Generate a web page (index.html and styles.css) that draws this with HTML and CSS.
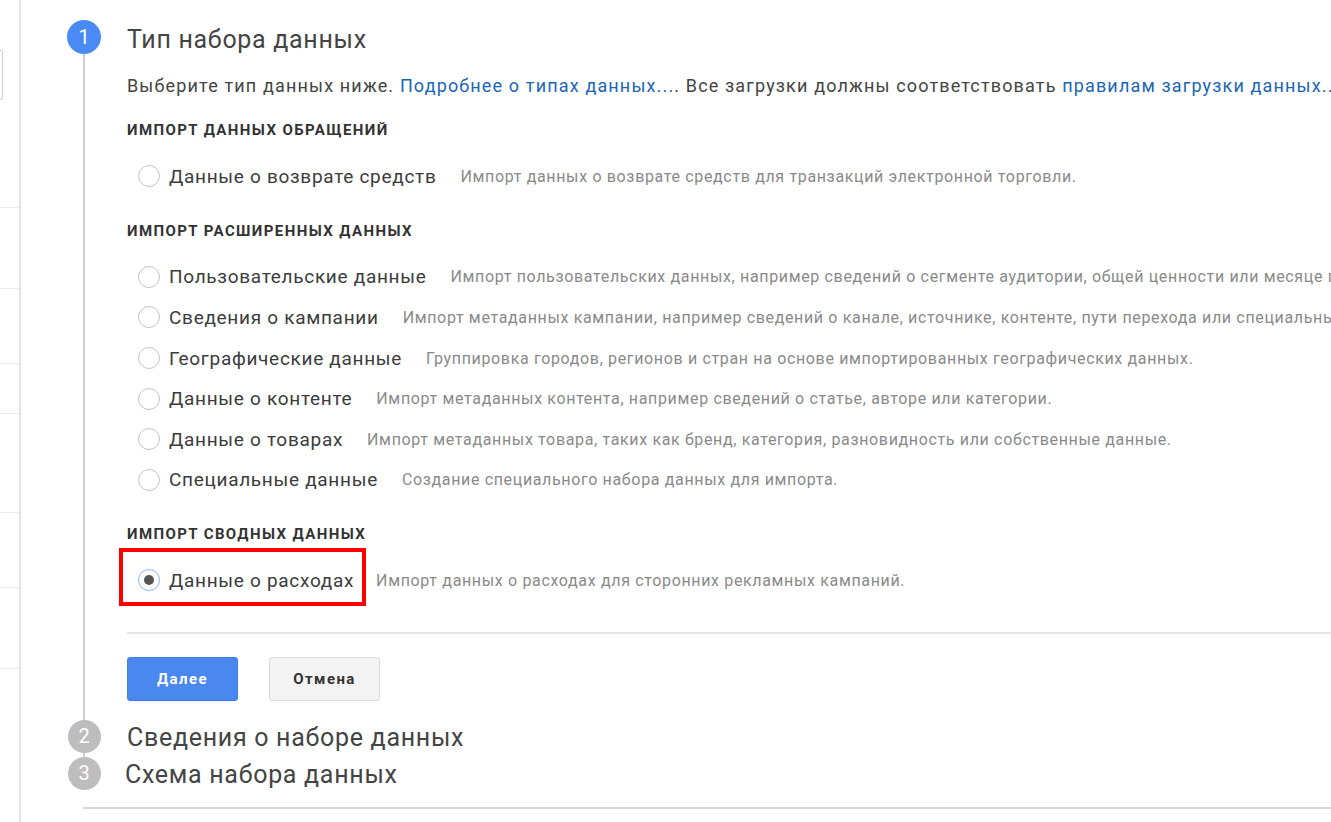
FILE: index.html
```html
<!DOCTYPE html>
<html lang="ru">
<head>
  <meta charset="UTF-8" />
  <meta name="viewport" content="width=device-width, initial-scale=1.0"/>
  <title>Новый набор данных</title>
  <link rel="stylesheet" href="styles.css">
</head>
<body>

  <div class="page">
    <aside class="sidebar">
      <div class="side-box"></div>
      <div class="side-row" style="height:208px"></div>
      <div class="side-row" style="height:81px"></div>
      <div class="side-row" style="height:75px"></div>
      <div class="side-row" style="height:50px"></div>
      <div class="side-row" style="height:99px"></div>
      <div class="side-row" style="height:75px"></div>
      <div class="side-row" style="height:81px"></div>
    </aside>

    <main class="wizard">
      <!-- step 1: data set type -->
      <div class="step step-open">
        <div class="rail">
          <span class="step-num active">1</span>
          <span class="rail-line"></span>
        </div>
        <div class="step-body">
          <h2 class="step-title">Тип набора данных</h2>
          <p class="intro">Выберите тип данных ниже. <a href="#">Подробнее о типах данных...</a>. Все загрузки должны соответствовать <a href="#">правилам загрузки данных..</a>.</p>

          <h4 class="group-title">Импорт данных обращений</h4>
          <div class="options">
            <label class="option">
              <input type="radio" name="dstype">
              <span class="opt-name">Данные о возврате средств</span>
              <span class="opt-desc">Импорт данных о возврате средств для транзакций электронной торговли.</span>
            </label>
          </div>

          <h4 class="group-title">Импорт расширенных данных</h4>
          <div class="options">
            <label class="option">
              <input type="radio" name="dstype">
              <span class="opt-name">Пользовательские данные</span>
              <span class="opt-desc">Импорт пользовательских данных, например сведений о сегменте аудитории, общей ценности или месяце первой покупки.</span>
            </label>
            <label class="option">
              <input type="radio" name="dstype">
              <span class="opt-name">Сведения о кампании</span>
              <span class="opt-desc">Импорт метаданных кампании, например сведений о канале, источнике, контенте, пути перехода или специальных параметрах.</span>
            </label>
            <label class="option">
              <input type="radio" name="dstype">
              <span class="opt-name">Географические данные</span>
              <span class="opt-desc">Группировка городов, регионов и стран на основе импортированных географических данных.</span>
            </label>
            <label class="option">
              <input type="radio" name="dstype">
              <span class="opt-name">Данные о контенте</span>
              <span class="opt-desc">Импорт метаданных контента, например сведений о статье, авторе или категории.</span>
            </label>
            <label class="option">
              <input type="radio" name="dstype">
              <span class="opt-name">Данные о товарах</span>
              <span class="opt-desc">Импорт метаданных товара, таких как бренд, категория, разновидность или собственные данные.</span>
            </label>
            <label class="option">
              <input type="radio" name="dstype">
              <span class="opt-name">Специальные данные</span>
              <span class="opt-desc">Создание специального набора данных для импорта.</span>
            </label>
          </div>

          <h4 class="group-title">Импорт сводных данных</h4>
          <div class="options">
            <label class="option">
              <span class="marked">
                <input type="radio" name="dstype" checked>
                <span class="opt-name">Данные о расходах</span>
              </span>
              <span class="opt-desc">Импорт данных о расходах для сторонних рекламных кампаний.</span>
            </label>
          </div>

          <div class="actions">
            <button class="btn btn-primary">Далее</button>
            <button class="btn">Отмена</button>
          </div>
        </div>
      </div>

      <!-- steps 2 and 3, collapsed -->
      <div class="step step-closed">
        <div class="rail">
          <span class="step-num">2</span>
          <span class="rail-line"></span>
        </div>
        <div class="step-body">
          <h2 class="step-title">Сведения о наборе данных</h2>
        </div>
      </div>

      <div class="step step-closed">
        <div class="rail">
          <span class="step-num">3</span>
        </div>
        <div class="step-body">
          <h2 class="step-title">Схема набора данных</h2>
        </div>
      </div>

      <div class="wizard-end"></div>
    </main>
  </div>

</body>
</html>
```

FILE: styles.css
```css
* {
  box-sizing: border-box;
}

body {
  margin: 0;
  background: #fff;
  font-family: Roboto, "Noto Sans", Arial, sans-serif;
  color: #333;
  overflow: hidden;
}

.page {
  display: flex;
  min-height: 822px;
}

/* narrow strip of the left navigation */
.sidebar {
  width: 21px;
  flex-shrink: 0;
  border-right: 2px solid #e3e3e3;
  position: relative;
}

.side-box {
  position: absolute;
  left: -4px;
  top: 50px;
  width: 7px;
  height: 50px;
  border: 1px solid #cfcfcf;
  border-radius: 2px;
}

.side-row {
  border-bottom: 1px solid #ececec;
}

.wizard {
  flex: 1;
  padding: 20px 0 0 46px;
  min-width: 0;
}

.step {
  display: flex;
  gap: 26px;
}

.step-open .step-body {
  padding-bottom: 19px;
}

/* number circle + connector line */
.rail {
  width: 34px;
  flex-shrink: 0;
  display: flex;
  flex-direction: column;
  align-items: center;
}

.step-num {
  width: 33px;
  height: 33px;
  border-radius: 50%;
  background: #bdbdbd;
  color: #fff;
  font-size: 20px;
  line-height: 33px;
  text-align: center;
  flex-shrink: 0;
}

.step-num.active {
  background: #4a8af4;
  width: 34px;
  height: 34px;
  line-height: 34px;
}

.rail-line {
  flex: 1;
  width: 2px;
  background: #cfcfcf;
}

.step-body {
  flex: 1;
  min-width: 0;
}

.step-title {
  margin: 0;
  font-size: 25px;
  font-weight: 400;
  letter-spacing: 0.7px;
  line-height: 40px;
  color: #444;
  white-space: nowrap;
}

.step-closed {
  min-height: 37px;
}

.step-closed .step-title {
  line-height: 33px;
  margin-top: 1px;
}

.step-closed + .step-closed .step-title {
  margin-left: -2px;
}

.step-closed .rail-line {
  min-height: 4px;
}

.wizard-end {
  margin: 13px 0 0 16px;
  border-top: 2px solid #d6d6d6;
}

.intro {
  margin: 12px 0 0;
  font-size: 18px;
  letter-spacing: 1.15px;
  line-height: 28px;
  color: #444;
  white-space: nowrap;
}

.intro a {
  color: #1a66b8;
  text-decoration: none;
}

.group-title {
  margin: 18px 0 0;
  font-size: 15px;
  font-weight: 700;
  letter-spacing: 1.4px;
  line-height: 24px;
  text-transform: uppercase;
  color: #333;
}

.options {
  margin-top: 14px;
}

.options + .group-title {
  margin-top: 22px;
}

.option {
  display: flex;
  align-items: center;
  height: 40.6px;
  padding-left: 11px;
  white-space: nowrap;
  cursor: pointer;
}

.option input {
  appearance: none;
  -webkit-appearance: none;
  width: 22px;
  height: 22px;
  margin: 0 9px 0 0;
  border: 1.5px solid #c4c4c4;
  border-radius: 50%;
  flex-shrink: 0;
  position: relative;
}

.option input:checked {
  border-color: #8ab4f8;
}

.option input:checked::after {
  content: "";
  position: absolute;
  left: 4.5px;
  top: 4.5px;
  width: 10px;
  height: 10px;
  border-radius: 50%;
  background: #555;
}

.opt-name {
  font-size: 19px;
  letter-spacing: 0.7px;
  color: #3c3c3c;
  margin-right: 24px;
}

.opt-desc {
  font-size: 16px;
  letter-spacing: 0.65px;
  color: #8a8a8a;
}

/* red frame drawn around the chosen type */
.marked {
  display: flex;
  align-items: center;
  position: relative;
}

.marked .opt-name {
  margin-right: 0;
}

.marked::after {
  content: "";
  position: absolute;
  left: -19px;
  right: -12px;
  top: -21px;
  bottom: -14px;
  border: 4px solid #f00;
}

.marked + .opt-desc {
  margin-left: 22px;
}

.actions {
  margin-top: 31px;
  border-top: 2px solid #e6e6e6;
  padding-top: 23px;
  display: flex;
  gap: 31px;
}

.btn {
  width: 111px;
  height: 44px;
  border: 1px solid #dcdcdc;
  border-radius: 3px;
  background: #f4f4f4;
  color: #333;
  font-family: Roboto, Arial, sans-serif;
  font-size: 15px;
  font-weight: 700;
  letter-spacing: 1.4px;
  cursor: pointer;
}

.btn-primary {
  background: #4a87ee;
  border-color: #3f7fe6;
  color: #fff;
}
```
